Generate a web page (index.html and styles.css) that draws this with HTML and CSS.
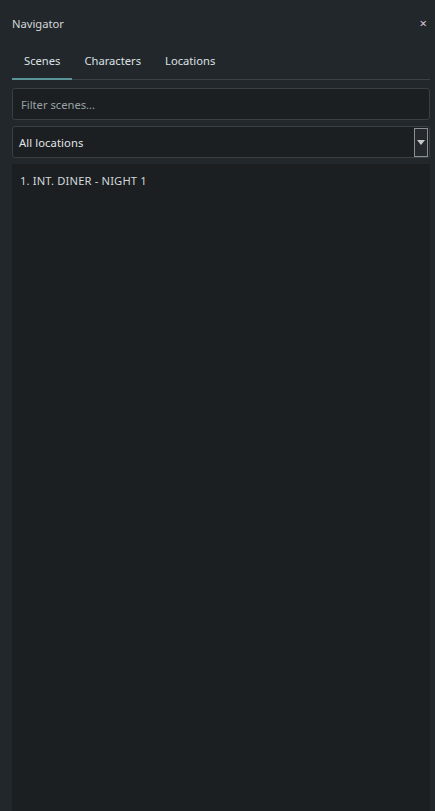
FILE: index.html
```html
<!DOCTYPE html>
<html lang="en">
<head>
    <meta charset="UTF-8">
    <meta name="viewport" content="width=device-width, initial-scale=1.0">
    <title>Navigator</title>
    <link rel="stylesheet" href="styles.css">
</head>
<body>
    <div class="panel">
        <div class="panel-header">
            <span class="panel-title">Navigator</span>
            <span class="panel-close">&times;</span>
        </div>

        <div class="tabs">
            <div class="tab active">Scenes</div>
            <div class="tab">Characters</div>
            <div class="tab">Locations</div>
        </div>

        <input type="text" class="filter" placeholder="Filter scenes...">

        <div class="select">
            <span class="select-value">All locations</span>
            <span class="select-button">
                <svg width="8" height="5" viewBox="0 0 8 5"><path d="M0 0H8L4 5Z" fill="#c8c8c8"/></svg>
            </span>
        </div>

        <ul class="scene-list">
            <li class="scene">1. INT. DINER - NIGHT 1</li>
        </ul>
    </div>
</body>
</html>
```

FILE: styles.css
```css
body {
    margin: 0;
    padding: 0;
    background-color: #22272b;
    font-family: 'Noto Sans', 'Open Sans', sans-serif;
    font-size: 11.2px;
    color: #d4d8da;
    height: 811px;
    overflow: hidden;
}
.panel {
    display: flex;
    flex-direction: column;
    height: 100%;
    padding: 0 5px 0 12px;
    box-sizing: border-box;
}
.panel-header {
    display: flex;
    justify-content: space-between;
    align-items: center;
    height: 46px;
}
.panel-title {
    color: #d4d8da;
}
.panel-close {
    color: #d6c8d6;
    font-size: 13px;
    margin-right: 3px;
}
.tabs {
    display: flex;
    border-bottom: 1px solid #3b4146;
    height: 33px;
}
.tab {
    padding: 7px 12px 0;
    color: #dde1e3;
}
.tab.active {
    border-bottom: 2px solid #5b9497;
    margin-bottom: -1px;
}
.filter {
    margin-top: 8px;
    height: 32px;
    box-sizing: border-box;
    width: 418px;
    background-color: #1b1f22;
    border: 1px solid #3a3f44;
    border-radius: 3px;
    padding: 0 8px;
    font-family: inherit;
    font-size: inherit;
    color: #d4d8da;
    outline: none;
}
.filter::placeholder {
    color: #9aa1a5;
}
.select {
    margin-top: 6px;
    height: 32px;
    width: 418px;
    box-sizing: border-box;
    background-color: #1b1f22;
    border: 1px solid #3a3f44;
    border-radius: 3px;
    display: flex;
    align-items: center;
    justify-content: space-between;
    padding-left: 6px;
}
.select-value {
    color: #e2e5e7;
    letter-spacing: 0.1px;
}
.select-button {
    width: 12px;
    height: 27px;
    border: 1px solid #8a8f93;
    background-color: #25292d;
    display: flex;
    align-items: center;
    justify-content: center;
    margin-right: 1px;
}
.scene-list {
    list-style: none;
    margin: 6px 0 0;
    padding: 9px 8px;
    flex: 1;
    width: 418px;
    box-sizing: border-box;
    background-color: #1b1f22;
}
.scene {
    color: #d4d8da;
    letter-spacing: 0.15px;
}
```
